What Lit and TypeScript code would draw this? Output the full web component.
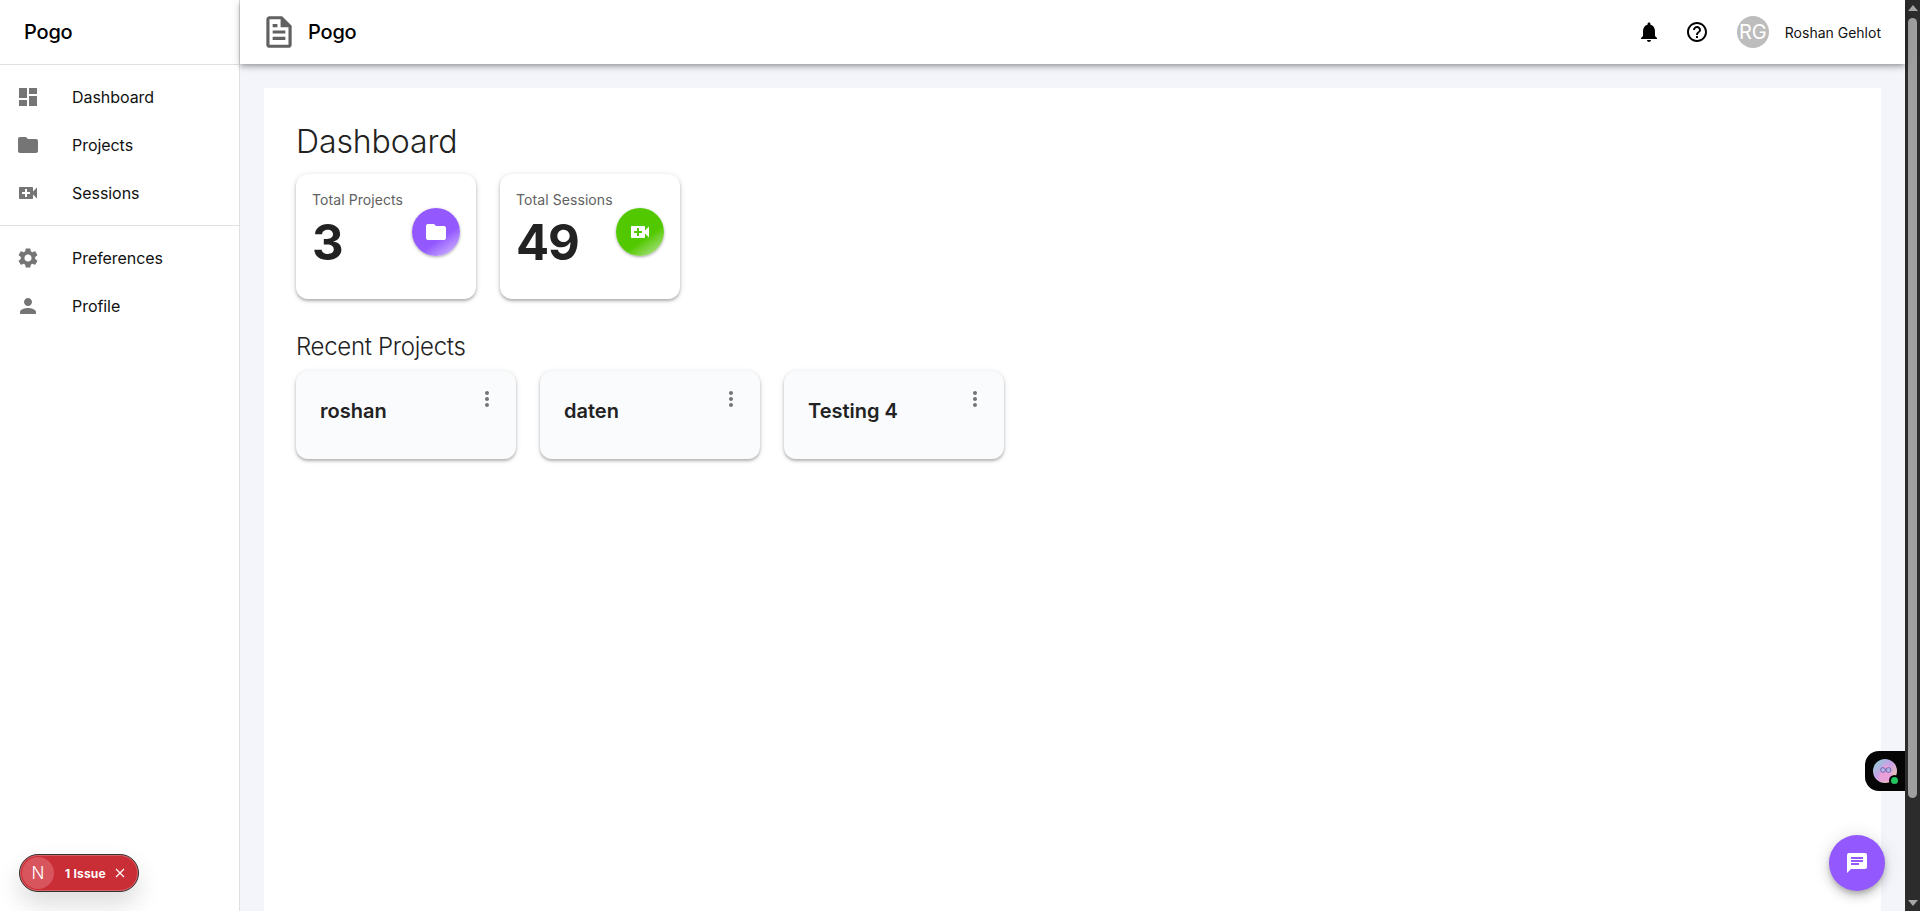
import { LitElement, html, css, svg } from "lit";
import { customElement } from "lit/decorators.js";

const ic = (d: string) => svg`<svg viewBox="0 0 24 24" width="24" height="24" fill="currentColor"><path d=${d}></path></svg>`;
const P = {
  dash: "M3 13h8V3H3v10zm0 8h8v-6H3v6zm10 0h8V11h-8v10zm0-18v6h8V3h-8z",
  folder: "M10 4H4c-1.1 0-1.99.9-1.99 2L2 18c0 1.1.9 2 2 2h16c1.1 0 2-.9 2-2V8c0-1.1-.9-2-2-2h-8l-2-2z",
  video: "M17 10.5V7c0-.55-.45-1-1-1H4c-.55 0-1 .45-1 1v10c0 .55.45 1 1 1h12c.55 0 1-.45 1-1v-3.5l4 4v-11l-4 4zM14 13h-3v3H9v-3H6v-2h3V8h2v3h3v2z",
  gear: "M19.14 12.94c.04-.3.06-.61.06-.94 0-.32-.02-.64-.07-.94l2.03-1.58c.18-.14.23-.41.12-.61l-1.92-3.32c-.12-.22-.37-.29-.59-.22l-2.39.96c-.5-.38-1.03-.7-1.62-.94l-.36-2.54c-.04-.24-.24-.41-.48-.41h-3.84c-.24 0-.43.17-.47.41l-.36 2.54c-.59.24-1.13.57-1.62.94l-2.39-.96c-.22-.08-.47 0-.59.22L2.74 8.87c-.12.21-.08.47.12.61l2.03 1.58c-.05.3-.09.63-.09.94s.02.64.07.94l-2.03 1.58c-.18.14-.23.41-.12.61l1.92 3.32c.12.22.37.29.59.22l2.39-.96c.5.38 1.03.7 1.62.94l.36 2.54c.05.24.24.41.48.41h3.84c.24 0 .44-.17.47-.41l.36-2.54c.59-.24 1.13-.56 1.62-.94l2.39.96c.22.08.47 0 .59-.22l1.92-3.32c.12-.22.07-.47-.12-.61l-2.01-1.58zM12 15.6c-1.98 0-3.6-1.62-3.6-3.6s1.62-3.6 3.6-3.6 3.6 1.62 3.6 3.6-1.62 3.6-3.6 3.6z",
  person: "M12 12c2.21 0 4-1.79 4-4s-1.79-4-4-4-4 1.79-4 4 1.79 4 4 4zm0 2c-2.67 0-8 1.34-8 4v2h16v-2c0-2.66-5.33-4-8-4z",
  doc: "M14 2H6c-1.1 0-1.99.9-1.99 2L4 20c0 1.1.89 2 1.99 2H18c1.1 0 2-.9 2-2V8l-6-6zm4 18H6V4h7v5h5v11zM8 15.01h8V17H8zM8 11h8v2H8zM8 7h3v2H8z",
  bell: "M12 22c1.1 0 2-.9 2-2h-4c0 1.1.9 2 2 2zm6-6v-5c0-3.07-1.63-5.64-4.5-6.32V4c0-.83-.67-1.5-1.5-1.5s-1.5.67-1.5 1.5v.68C7.64 5.36 6 7.92 6 11v5l-2 2v1h16v-1l-2-2z",
  help: "M11 18h2v-2h-2v2zm1-16C6.48 2 2 6.48 2 12s4.48 10 10 10 10-4.48 10-10S17.52 2 12 2zm0 18c-4.41 0-8-3.59-8-8s3.59-8 8-8 8 3.59 8 8-3.59 8-8 8zm0-14c-2.21 0-4 1.79-4 4h2c0-1.1.9-2 2-2s2 .9 2 2c0 2-3 1.75-3 5h2c0-2.25 3-2.5 3-5 0-2.21-1.79-4-4-4z",
  more: "M12 8c1.1 0 2-.9 2-2s-.9-2-2-2-2 .9-2 2 .9 2 2 2zm0 2c-1.1 0-2 .9-2 2s.9 2 2 2 2-.9 2-2-.9-2-2-2zm0 6c-1.1 0-2 .9-2 2s.9 2 2 2 2-.9 2-2-.9-2-2-2z",
  chat: "M20 2H4c-1.1 0-1.99.9-1.99 2L2 22l4-4h14c1.1 0 2-.9 2-2V4c0-1.1-.9-2-2-2zM6 9h12v2H6V9zm8 5H6v-2h8v2zm4-6H6V6h12v2z",
};

@customElement("app-root")
export class AppRoot extends LitElement {
  static styles = css`
    :host { display: block; height: 911px; overflow: hidden; font-family: Inter, "Noto Sans", sans-serif; color: #111; }
    * { box-sizing: border-box; }
    .app { position: relative; display: flex; height: 911px; background: #f4f5fa; }
    .side { width: 240px; flex: none; background: #fff; border-right: 1px solid #e0e0e0; }
    .brand { height: 65px; border-bottom: 1px solid #e0e0e0; padding: 0 24px 1px; display: flex; align-items: center; font-size: 20px; font-weight: 500; letter-spacing: -.2px; color: #000; }
    .list { padding: 8px 0; }
    .list + .list { border-top: 1px solid #e0e0e0; }
    .item { height: 48px; display: flex; align-items: center; padding: 0 16px; font-size: 16px; letter-spacing: -.05px; color: #111; }
    .item svg { color: #757575; }
    .item span { margin-left: 32px; }
    .main { flex: 1; min-width: 0; display: flex; flex-direction: column; }
    .top { height: 64px; flex: none; background: #fff; display: flex; align-items: center; padding: 0 24px; box-shadow: 0 2px 4px -1px rgba(0,0,0,.2), 0 4px 5px 0 rgba(0,0,0,.14), 0 1px 10px 0 rgba(0,0,0,.12); position: relative; z-index: 1; }
    .top .doc { color: #616161; width: 38px; height: 38px; margin-left: -4px; flex: none; }
    .top .name { font-size: 20px; font-weight: 500; letter-spacing: -.2px; color: #000; margin-left: 10px; }
    .grow { flex: 1; }
    .hicon { width: 24px; height: 24px; color: #000; margin-right: 24px; }
    .hicon svg { display: block; }
    .avatar { width: 32px; height: 32px; border-radius: 50%; background: #bdbdbd; color: #fff; font-size: 20px; display: flex; align-items: center; justify-content: center; margin-left: 4px; }
    .user { font-size: 14px; margin-left: 16px; color: #111; }
    .content { flex: 1; padding: 24px 24px 0; min-height: 0; }
    .panel { background: #fff; height: 100%; padding: 34px 32px 0; overflow: hidden; }
    h1 { margin: 0; font-size: 32px; font-weight: 300; letter-spacing: -.1px; line-height: 40px; color: #222; }
    .stats { display: flex; gap: 24px; margin-top: 12px; }
    .stat { width: 180px; height: 125px; background: #fff; border-radius: 12px; padding: 16px; position: relative; box-shadow: 0 2px 3px rgba(0,0,0,.25), 0 1px 6px rgba(0,0,0,.12); }
    .stat .lbl { font-size: 14px; letter-spacing: .08px; line-height: 20px; color: #616161; }
    .stat .num { font-size: 49px; font-weight: 700; letter-spacing: -1.2px; line-height: 58px; color: #222; margin-top: 4px; }
    .badge { position: absolute; left: 116px; top: 34px; width: 48px; height: 48px; border-radius: 50%; display: flex; align-items: center; justify-content: center; color: #fff; box-shadow: 0 1px 3px rgba(0,0,0,.35); }
    .purple { background: linear-gradient(145deg, #9359ff 62%, #dcc9ff 100%); }
    .green { background: linear-gradient(145deg, #52c800 62%, #c4e8a8 100%); }
    h2 { margin: 34px 0 0; font-size: 24px; font-weight: 300; letter-spacing: -.3px; line-height: 28px; color: #222; }
    .projects { display: flex; gap: 24px; margin-top: 10px; }
    .proj { width: 220px; height: 88px; background: #fafbfd; border-radius: 12px; padding: 25px 24px 0; display: flex; justify-content: space-between; box-shadow: 0 2px 3px rgba(0,0,0,.25), 0 1px 6px rgba(0,0,0,.1); font-size: 20px; font-weight: 600; line-height: 30px; color: #222; }
    .proj svg { color: #757575; margin: -9px -7px 0 0; }
    .scroll { width: 15px; flex: none; background: #2c2c2c; display: flex; flex-direction: column; align-items: center; padding: 5px 0; }
    .up, .down { width: 0; height: 0; border-left: 5px solid transparent; border-right: 5px solid transparent; flex: none; }
    .up { border-bottom: 6px solid #a6a6a6; }
    .down { border-top: 6px solid #a6a6a6; margin-top: auto; }
    .thumb { width: 9px; height: 780px; margin-top: 7px; border-radius: 5px; background: #9f9f9f; }
    .issue { position: absolute; left: 19px; top: 854px; width: 120px; height: 38px; border-radius: 19px; background: #c92d35; border: 1px solid #333; outline: 1px solid rgba(255,255,255,.25); outline-offset: -2px; color: #fff; display: flex; align-items: center; padding-left: 2px; font-size: 12px; font-weight: 700; letter-spacing: .2px; box-shadow: 0 12px 24px rgba(0,0,0,.14); }
    .n { width: 32px; height: 32px; border-radius: 50%; background: #d9555e; display: flex; align-items: center; justify-content: center; font-size: 17px; font-weight: 300; margin-right: 11px; flex: none; }
    .issue svg { margin-left: 8px; }
    .widget { position: absolute; right: 15px; top: 751px; width: 40px; height: 40px; background: #050505; border-radius: 14px 0 0 14px; padding: 8px; }
    .face { width: 24px; height: 24px; position: relative; }
    .face svg { display: block; }
    .dot { position: absolute; right: -3px; bottom: -3px; width: 11px; height: 11px; border-radius: 50%; background: #22c55e; border: 2px solid #050505; }
    .fab { position: absolute; left: 1829px; top: 835px; width: 56px; height: 56px; border-radius: 50%; background: #9359ff; color: #fff; display: flex; align-items: center; justify-content: center; box-shadow: 0 3px 5px -1px rgba(0,0,0,.2), 0 6px 10px 0 rgba(0,0,0,.14), 0 1px 18px 0 rgba(0,0,0,.12); }
  `;

  private item(d: string, t: string) {
    return html`<div class="item">${ic(d)}<span>${t}</span></div>`;
  }

  render() {
    return html`<div class="app">
      <aside class="side">
        <div class="brand">Pogo</div>
        <div class="list">${this.item(P.dash, "Dashboard")}${this.item(P.folder, "Projects")}${this.item(P.video, "Sessions")}</div>
        <div class="list">${this.item(P.gear, "Preferences")}${this.item(P.person, "Profile")}</div>
      </aside>
      <div class="main">
        <header class="top">
          <svg class="doc" viewBox="0 0 24 24" fill="currentColor"><path d=${P.doc}></path></svg>
          <span class="name">Pogo</span>
          <span class="grow"></span>
          <span class="hicon">${ic(P.bell)}</span>
          <span class="hicon">${ic(P.help)}</span>
          <span class="avatar">RG</span>
          <span class="user">Roshan Gehlot</span>
        </header>
        <div class="content"><div class="panel">
          <h1>Dashboard</h1>
          <div class="stats">
            <div class="stat"><div class="lbl">Total Projects</div><div class="num">3</div><div class="badge purple">${ic(P.folder)}</div></div>
            <div class="stat"><div class="lbl">Total Sessions</div><div class="num">49</div><div class="badge green">${ic(P.video)}</div></div>
          </div>
          <h2>Recent Projects</h2>
          <div class="projects">
            ${["roshan", "daten", "Testing 4"].map((n) => html`<div class="proj"><span>${n}</span>${ic(P.more)}</div>`)}
          </div>
        </div></div>
      </div>
      <div class="scroll"><div class="up"></div><div class="thumb"></div><div class="down"></div></div>
      <div class="issue"><span class="n">N</span><span>1 Issue</span><svg width="12" height="12" viewBox="0 0 12 12" fill="none" stroke="#fff" stroke-width="1.2"><path d="M2 2l8 8M10 2l-8 8"></path></svg></div>
      <div class="widget"><div class="face">
        <svg width="24" height="24" viewBox="0 0 24 24">
          <defs><linearGradient id="fg" x1="0" y1="0" x2="1" y2="1"><stop offset="0" stop-color="#7fd8cf"></stop><stop offset=".45" stop-color="#c9a0e8"></stop><stop offset="1" stop-color="#f8cfa0"></stop></linearGradient></defs>
          <circle cx="12" cy="12" r="12" fill="url(#fg)"></circle>
          <path d="M6 22c0-5 1-15 7-16 5 0 6 7 6 16z" fill="#e9a0d8"></path>
          <circle cx="10" cy="11" r="2.4" fill="#b9b4e8" stroke="#5b5ba8" stroke-width=".8"></circle>
          <circle cx="15.5" cy="11" r="2.4" fill="#b9b4e8" stroke="#5b5ba8" stroke-width=".8"></circle>
        </svg>
        <span class="dot"></span></div></div>
      <div class="fab">${ic(P.chat)}</div>
    </div>`;
  }
}
